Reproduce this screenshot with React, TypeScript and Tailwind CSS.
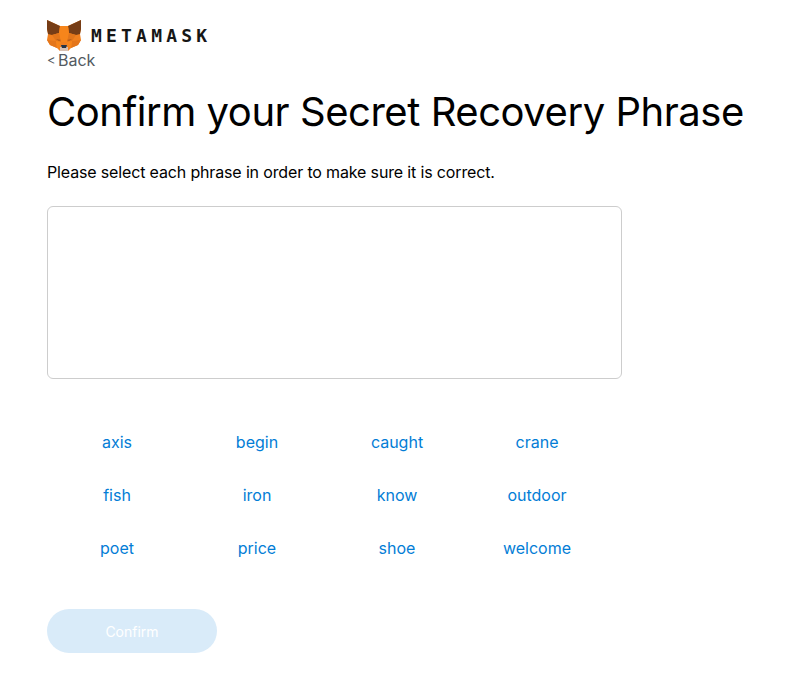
const WORDS = ['axis', 'begin', 'caught', 'crane', 'fish', 'iron', 'know', 'outdoor', 'poet', 'price', 'shoe', 'welcome'];

function Fox() {
  return (
    <svg width="34" height="31" viewBox="0 0 34 31" className="shrink-0">
      {/* silhouette */}
      <polygon points="0,0 13,6 21,6 34,0 34,9 33,14 34,20 31,25 24,28 21,31 13,31 10,28 3,25 0,20 1,14 0,9" fill="#f0801f" />
      {/* ears */}
      <polygon points="0,0 13,6 12,13 5,15 1,14 0,9" fill="#763d16" />
      <polygon points="34,0 21,6 22,13 29,15 33,14 34,9" fill="#763d16" />
      {/* forehead */}
      <polygon points="13,6 21,6 22,13 20,22 14,22 12,13" fill="#f6851b" />
      <polygon points="5,15 12,13 14,22 9,21" fill="#e2761b" />
      <polygon points="29,15 22,13 20,22 25,21" fill="#e2761b" />
      {/* eyes */}
      <polygon points="9,19 14,20 12,21" fill="#a8591c" />
      <polygon points="25,19 20,20 22,21" fill="#a8591c" />
      {/* cheeks */}
      <polygon points="0,20 9,21 10,28 3,25" fill="#e4761b" />
      <polygon points="34,20 25,21 24,28 31,25" fill="#e4761b" />
      <polygon points="9,21 14,22 13,27 10,28" fill="#f6851b" />
      <polygon points="25,21 20,22 21,27 24,28" fill="#f6851b" />
      {/* muzzle */}
      <polygon points="13,27 21,27 21,31 13,31" fill="#d7c1b3" />
      <polygon points="14,25 20,25 19,28 15,28" fill="#233447" />
    </svg>
  );
}

export default function App() {
  return (
    <div className="min-h-screen bg-white pl-[47px] pt-[20px] font-['Inter',sans-serif] text-black">
      <header className="flex h-[31px] items-center gap-[10px]">
        <Fox />
        <span className="font-['DejaVu_Sans_Mono',monospace] text-[18px] font-bold leading-none tracking-[4.2px] text-[#161616]">
          METAMASK
        </span>
      </header>

      <a className="flex h-[18px] items-center text-[16px] leading-none text-[#535a61]">
        <span className="w-[11px] text-[13px]">&lt;</span>
        <span>Back</span>
      </a>

      <h1 className="mt-[21px] whitespace-nowrap text-[40px] leading-[44px] tracking-[-0.46px]">Confirm your Secret Recovery Phrase</h1>

      <p className="mt-[26px] text-[16px] leading-[24px] tracking-[-0.15px]">Please select each phrase in order to make sure it is correct.</p>

      <div className="mt-[22px] h-[173px] w-[575px] rounded-[6px] border border-[#cdcdcd]" />

      <div className="mt-[36px] grid w-[560px] grid-cols-4">
        {WORDS.map((word) => (
          <button key={word} className="flex h-[53px] w-[140px] items-center justify-center text-[16px] text-[#037dd6]">
            {word}
          </button>
        ))}
      </div>

      <button className="mt-[35px] flex h-[44px] w-[170px] items-center justify-center rounded-full bg-[#d9ebf9] text-[14px] text-white">
        Confirm
      </button>
    </div>
  );
}
